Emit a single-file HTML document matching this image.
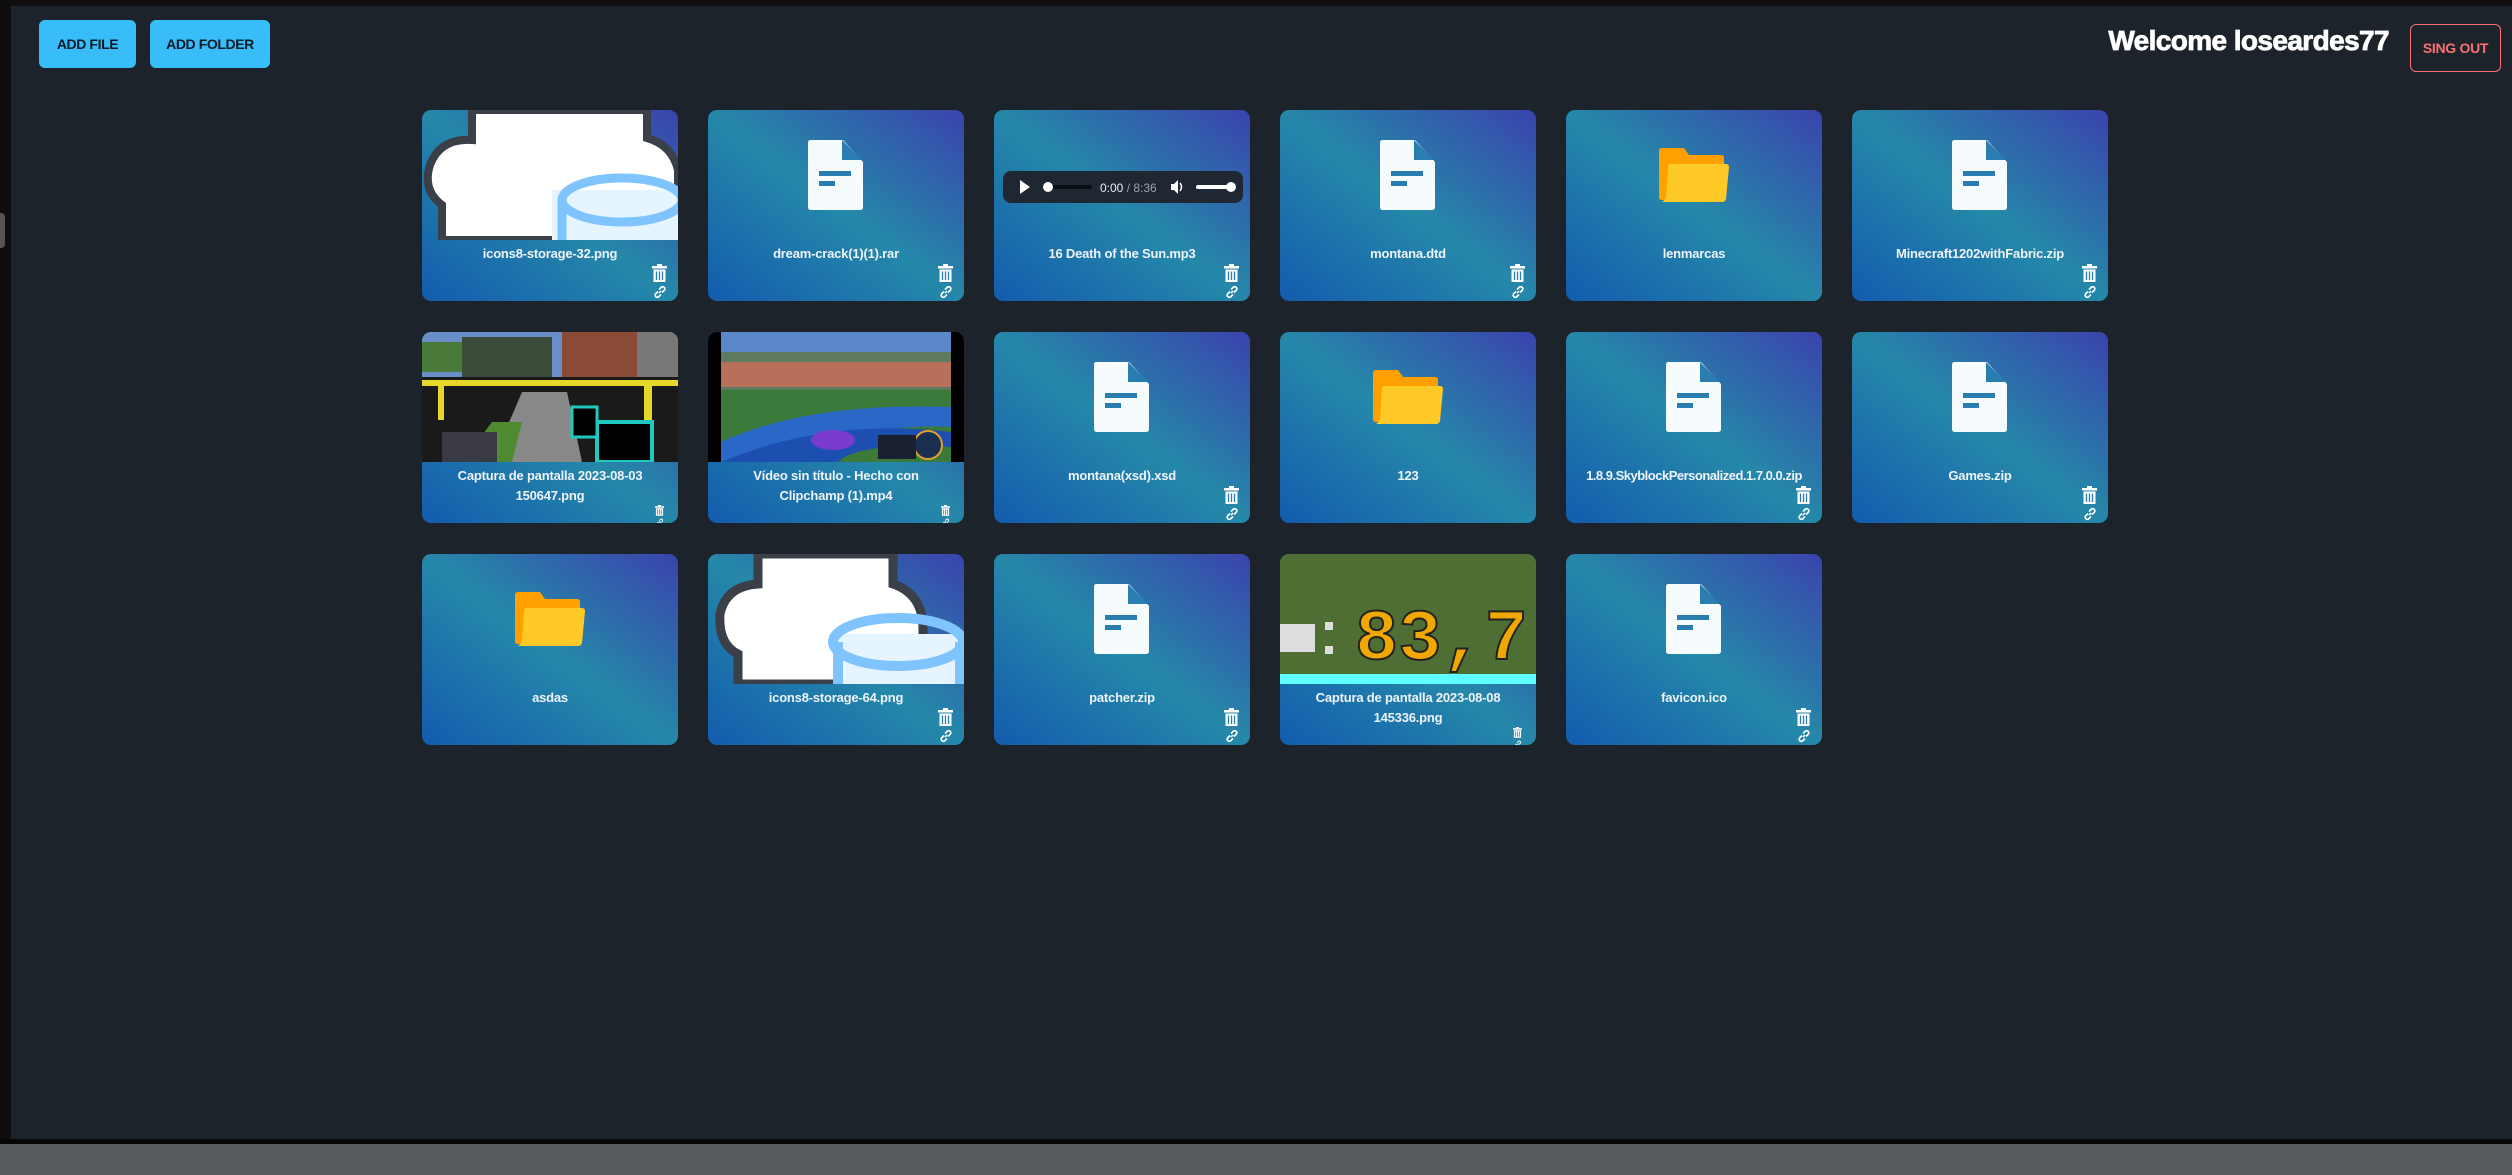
<!DOCTYPE html>
<html><head><meta charset="utf-8"><style>
*{margin:0;padding:0;box-sizing:border-box}
body{width:2512px;height:1175px;background:#0e0e0e;position:relative;overflow:hidden;font-family:"Liberation Sans",sans-serif}
.main{position:absolute;left:11px;top:6px;width:2501px;height:1133px;background:#1d232b}
.bar{position:absolute;left:0;top:1144px;width:2512px;height:31px;background:#555a5f}
.bar2{position:absolute;left:0;top:1139px;width:2512px;height:5px;background:#060606}
.tab{position:absolute;left:0;top:213px;width:5px;height:35px;background:#555;border-radius:0 4px 4px 0}
.btn{position:absolute;top:20px;height:48px;background:#38bdf8;border-radius:6px;color:#0c1a2a;font-weight:bold;font-size:14px;display:flex;align-items:center;justify-content:center;letter-spacing:-0.4px}
.welcome{position:absolute;right:123px;top:25px;color:#fff;font-weight:900;font-size:28px;letter-spacing:-0.6px;-webkit-text-stroke:0.8px #fff}
.out{position:absolute;left:2410px;top:24px;width:91px;height:48px;border:1.5px solid #f87171;border-radius:6px;color:#f87171;font-weight:bold;font-size:14px;display:flex;align-items:center;justify-content:center;letter-spacing:-0.3px}
.card{position:absolute;width:256px;height:191px;border-radius:9px;overflow:hidden;background:linear-gradient(to top right,#135cae 0%,#2588a9 50%,#3a43ad 100%)}
.lbl{position:absolute;left:2px;right:2px;top:134px;text-align:center;color:#eef4fa;font-weight:bold;font-size:13px;line-height:20px;letter-spacing:-0.2px;white-space:nowrap}
.img{position:absolute;left:0;top:0;width:256px;height:130px}
.doc{position:absolute;left:100px;top:30px}
.fold{position:absolute;left:93px;top:38px}
.tr{position:absolute;right:11px;top:154px}
.ln{position:absolute;right:11px;top:175px}
.sm .tr{right:14px;top:173px;transform:scale(.6);transform-origin:right top}
.sm .ln{right:14px;top:186px;transform:scale(.6);transform-origin:right top}
.aud{position:absolute;left:9px;top:61px;width:240px;height:32px;background:#1e2732;border-radius:8px}
</style></head><body>
<div class="main"></div><div class="bar2"></div><div class="bar"></div><div class="tab"></div>
<div class="btn" style="left:39px;width:97px">ADD FILE</div>
<div class="btn" style="left:150px;width:120px">ADD FOLDER</div>
<div class="welcome">Welcome loseardes77</div>
<div class="out">SING OUT</div>

<svg width="0" height="0" style="position:absolute">
<defs>
<symbol id="doc" viewBox="0 0 55 70"><path d="M2 0H35L55 22V67Q55 70 52 70H3Q0 70 0 67V3Q0 0 2 0Z" fill="#f6fbfd"/><path d="M34 0V20H54Z" fill="#2a7db0"/><rect x="11" y="31" width="32" height="5" fill="#2a7db0"/><rect x="11" y="41" width="16" height="5" fill="#2a7db0"/></symbol>
<symbol id="fold" viewBox="0 0 70 54"><path d="M3 0H25L30 7H62Q65 7 65 10V52H3Q0 52 0 49V3Q0 0 3 0Z" fill="#ffa000"/><path d="M12 16H67Q70 16 70 19L67 51Q66 54 63 54H3Q6 52 7 49L9 19Q9 16 12 16Z" fill="#ffca28"/></symbol>
<symbol id="tr" viewBox="0 0 15 19"><rect x="0" y="2" width="15" height="2.5" fill="#fff"/><rect x="5" y="0" width="5" height="2.5" fill="#fff"/><path d="M1.5 5.5H13.5V18H1.5Z" fill="#fff"/><path d="M4.5 7.5V16M7.5 7.5V16M10.5 7.5V16" stroke="#2a7db0" stroke-width="1.3"/></symbol>
<symbol id="ln" viewBox="0 0 14 14"><g fill="none" stroke="#fff" stroke-width="1.6"><path d="M6 8L8 6"/><path d="M5 6.5L2.5 9a2.2 2.2 0 0 0 3 3L8 9.5"/><path d="M6 4.5L8.5 2a2.2 2.2 0 0 1 3 3L9 7.5"/></g></symbol>
</defs></svg>

<!-- Row 1 -->
<div class="card" style="left:422px;top:110px"><svg class="img" viewBox="0 0 256 130"><path d="M20 130V95Q0 80 8 55Q18 28 50 30V0H225V28Q250 35 256 60V130Z" fill="#fff" stroke="#3a3f48" stroke-width="8"/><rect x="130" y="80" width="130" height="52" fill="#e6f4ff"/><ellipse cx="200" cy="90" rx="60" ry="22" fill="none" stroke="#7fc4ff" stroke-width="9"/><path d="M140 90V130" stroke="#7fc4ff" stroke-width="9"/></svg><div class="lbl">icons8-storage-32.png</div><svg class="tr" width="15" height="19"><use href="#tr"/></svg><svg class="ln" width="14" height="14"><use href="#ln"/></svg></div>
<div class="card" style="left:708px;top:110px"><svg class="doc" width="55" height="70"><use href="#doc"/></svg><div class="lbl">dream-crack(1)(1).rar</div><svg class="tr" width="15" height="19"><use href="#tr"/></svg><svg class="ln" width="14" height="14"><use href="#ln"/></svg></div>
<div class="card" style="left:994px;top:110px"><div class="aud"><svg width="240" height="32" viewBox="0 0 240 32"><path d="M17 9L27 16L17 23Z" fill="#fff"/><rect x="43" y="14" width="46" height="4" rx="2" fill="#0b0f14"/><circle cx="45" cy="16" r="5" fill="#fff"/><text x="97" y="21" font-family="Liberation Sans" font-size="12" fill="#e8eef3">0:00 <tspan fill="#9aa4ad">/ 8:36</tspan></text><path d="M168 13h3l4-4v14l-4-4h-3z" fill="#fff"/><path d="M177 12q3 4 0 8" stroke="#fff" fill="none" stroke-width="1.5"/><rect x="193" y="14" width="35" height="4" rx="2" fill="#fff"/><circle cx="228" cy="16" r="5" fill="#fff"/></svg></div><div class="lbl">16 Death of the Sun.mp3</div><svg class="tr" width="15" height="19"><use href="#tr"/></svg><svg class="ln" width="14" height="14"><use href="#ln"/></svg></div>
<div class="card" style="left:1280px;top:110px"><svg class="doc" width="55" height="70"><use href="#doc"/></svg><div class="lbl">montana.dtd</div><svg class="tr" width="15" height="19"><use href="#tr"/></svg><svg class="ln" width="14" height="14"><use href="#ln"/></svg></div>
<div class="card" style="left:1566px;top:110px"><svg class="fold" width="70" height="54"><use href="#fold"/></svg><div class="lbl">lenmarcas</div></div>
<div class="card" style="left:1852px;top:110px"><svg class="doc" width="55" height="70"><use href="#doc"/></svg><div class="lbl">Minecraft1202withFabric.zip</div><svg class="tr" width="15" height="19"><use href="#tr"/></svg><svg class="ln" width="14" height="14"><use href="#ln"/></svg></div>

<!-- Row 2 -->
<div class="card sm" style="left:422px;top:332px"><svg class="img" viewBox="0 0 256 130"><rect width="256" height="130" fill="#6a8fc8"/><rect x="0" y="10" width="40" height="30" fill="#4a7a3a"/><rect x="40" y="5" width="90" height="45" fill="#3c4a3a"/><rect x="140" y="0" width="80" height="60" fill="#8a4a36"/><rect x="215" y="0" width="41" height="70" fill="#777"/><rect x="0" y="45" width="256" height="85" fill="#1a1a1a"/><rect x="0" y="48" width="256" height="6" fill="#e6d82a"/><rect x="16" y="48" width="6" height="40" fill="#e6d82a"/><rect x="222" y="48" width="8" height="45" fill="#e6d82a"/><path d="M100 60L145 60L160 130H70Z" fill="#888"/><path d="M70 90L100 90L90 130H40Z" fill="#4f8a30"/><rect x="175" y="90" width="55" height="40" fill="#000" stroke="#1fc9c0" stroke-width="4"/><rect x="150" y="75" width="25" height="30" fill="#000" stroke="#1fc9c0" stroke-width="3"/><rect x="20" y="100" width="55" height="30" fill="#3a3a44"/></svg><div class="lbl">Captura de pantalla 2023-08-03<br>150647.png</div><svg class="tr" width="15" height="19"><use href="#tr"/></svg><svg class="ln" width="14" height="14"><use href="#ln"/></svg></div>
<div class="card sm" style="left:708px;top:332px"><svg class="img" viewBox="0 0 256 130"><rect width="256" height="130" fill="#000"/><rect x="13" y="0" width="230" height="130" fill="#5a88c8"/><rect x="13" y="20" width="230" height="40" fill="#5e7a60"/><rect x="13" y="30" width="230" height="25" fill="#b8705a"/><rect x="13" y="58" width="230" height="72" fill="#3b7a3a"/><path d="M13 110Q100 70 243 75V95Q150 90 100 130H13Z" fill="#2a68c8"/><path d="M13 130Q120 85 243 100V115Q150 110 130 130Z" fill="#1c4fb0"/><ellipse cx="125" cy="108" rx="22" ry="10" fill="#7a3ad0"/><circle cx="220" cy="113" r="14" fill="#1a3050" stroke="#e0a030" stroke-width="2"/><rect x="170" y="103" width="38" height="24" fill="#1a2030"/></svg><div class="lbl">Vídeo sin título - Hecho con<br>Clipchamp (1).mp4</div><svg class="tr" width="15" height="19"><use href="#tr"/></svg><svg class="ln" width="14" height="14"><use href="#ln"/></svg></div>
<div class="card" style="left:994px;top:332px"><svg class="doc" width="55" height="70"><use href="#doc"/></svg><div class="lbl">montana(xsd).xsd</div><svg class="tr" width="15" height="19"><use href="#tr"/></svg><svg class="ln" width="14" height="14"><use href="#ln"/></svg></div>
<div class="card" style="left:1280px;top:332px"><svg class="fold" width="70" height="54"><use href="#fold"/></svg><div class="lbl">123</div></div>
<div class="card" style="left:1566px;top:332px"><svg class="doc" width="55" height="70"><use href="#doc"/></svg><div class="lbl" style="letter-spacing:-0.5px">1.8.9.SkyblockPersonalized.1.7.0.0.zip</div><svg class="tr" width="15" height="19"><use href="#tr"/></svg><svg class="ln" width="14" height="14"><use href="#ln"/></svg></div>
<div class="card" style="left:1852px;top:332px"><svg class="doc" width="55" height="70"><use href="#doc"/></svg><div class="lbl">Games.zip</div><svg class="tr" width="15" height="19"><use href="#tr"/></svg><svg class="ln" width="14" height="14"><use href="#ln"/></svg></div>

<!-- Row 3 -->
<div class="card" style="left:422px;top:554px"><svg class="fold" width="70" height="54"><use href="#fold"/></svg><div class="lbl">asdas</div></div>
<div class="card" style="left:708px;top:554px"><svg class="img" viewBox="0 0 256 130"><path d="M30 130V100Q10 90 12 60Q18 32 50 30V0H185V30Q215 40 215 75V130Z" fill="#fff" stroke="#3a3f48" stroke-width="9"/><rect x="125" y="80" width="131" height="52" fill="#e6f4ff"/><ellipse cx="190" cy="88" rx="65" ry="24" fill="none" stroke="#7fc4ff" stroke-width="10"/><path d="M130 88V130M252 88V130" stroke="#7fc4ff" stroke-width="10"/></svg><div class="lbl">icons8-storage-64.png</div><svg class="tr" width="15" height="19"><use href="#tr"/></svg><svg class="ln" width="14" height="14"><use href="#ln"/></svg></div>
<div class="card" style="left:994px;top:554px"><svg class="doc" width="55" height="70"><use href="#doc"/></svg><div class="lbl">patcher.zip</div><svg class="tr" width="15" height="19"><use href="#tr"/></svg><svg class="ln" width="14" height="14"><use href="#ln"/></svg></div>
<div class="card sm" style="left:1280px;top:554px"><svg class="img" viewBox="0 0 256 130"><rect width="256" height="130" fill="#4f6e34"/><rect x="0" y="70" width="35" height="28" fill="#ddd"/><rect x="45" y="68" width="8" height="8" fill="#ddd"/><rect x="45" y="92" width="8" height="8" fill="#ddd"/><text x="75" y="105" font-family="Liberation Mono" font-weight="bold" font-size="72" fill="#f0a800" stroke="#222" stroke-width="2">83,7</text><rect x="0" y="120" width="256" height="10" fill="#5fffff"/></svg><div class="lbl">Captura de pantalla 2023-08-08<br>145336.png</div><svg class="tr" width="15" height="19"><use href="#tr"/></svg><svg class="ln" width="14" height="14"><use href="#ln"/></svg></div>
<div class="card" style="left:1566px;top:554px"><svg class="doc" width="55" height="70"><use href="#doc"/></svg><div class="lbl">favicon.ico</div><svg class="tr" width="15" height="19"><use href="#tr"/></svg><svg class="ln" width="14" height="14"><use href="#ln"/></svg></div>
</body></html>
